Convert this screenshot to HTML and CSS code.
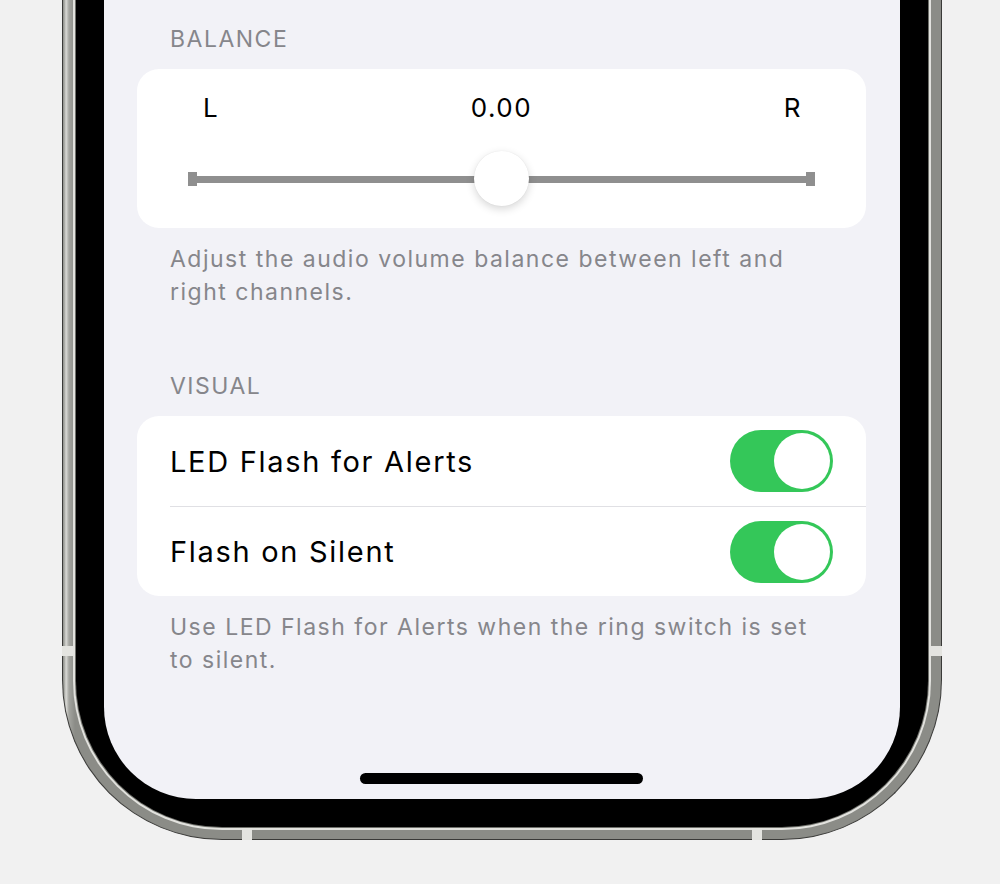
FILE: index.html
```html
<!DOCTYPE html>
<html>
<head>
<meta charset="utf-8">
<title>Audio &amp; Visual</title>
<link rel="stylesheet" href="styles.css">
</head>
<body>
<div class="device">
  <span class="band band-left"></span>
  <span class="band band-right"></span>
  <span class="band band-bottom-left"></span>
  <span class="band band-bottom-right"></span>
  <div class="bezel">
    <div class="screen">

      <div class="group-header">BALANCE</div>
      <div class="card balance">
        <div class="balance-labels">
          <span>L</span>
          <span>0.00</span>
          <span>R</span>
        </div>
        <div class="slider">
          <div class="track"></div>
          <div class="thumb"></div>
        </div>
      </div>
      <div class="group-footer">Adjust the audio volume balance between left and right channels.</div>

      <div class="group-header">VISUAL</div>
      <div class="card">
        <div class="row">
          <span class="row-label">LED Flash for Alerts</span>
          <span class="toggle on"><span class="knob"></span></span>
        </div>
        <div class="row">
          <span class="row-label">Flash on Silent</span>
          <span class="toggle on"><span class="knob"></span></span>
        </div>
      </div>
      <div class="group-footer">Use LED Flash for Alerts when the ring switch is set to silent.</div>

      <div class="home-indicator"></div>
    </div>
  </div>
</div>
</body>
</html>
```

FILE: styles.css
```css
html, body {
  margin: 0;
  padding: 0;
}
body {
  background: #f1f1f1;
  font-family: Inter, "Noto Sans", sans-serif;
  width: 1000px;
  height: 884px;
  overflow: hidden;
}

/* phone body: steel rim, black bezel, screen */
.device {
  position: relative;
  width: 880px;
  margin-left: 62px;
  padding: 0 13px 12px 13px;
  box-sizing: border-box;
  background: linear-gradient(90deg, #8e8f8a, #b4b5b0 2px, #dcdcd8 3px, #a3a49f 6px, #8b8c87 12px);
  border: 1px solid #3a3a38;
  border-top: none;
  border-radius: 0 0 160px 160px;
}
.bezel {
  background: #000;
  padding: 0 28px 28px 28px;
  border-radius: 0 0 146px 146px;
  box-shadow: 0 0 0 1px #6f706b, 0 0 0 3px #e2e2de;
}
.screen {
  position: relative;
  height: 799px;
  background: #f2f2f7;
  border-radius: 0 0 92px 92px;
  padding: 24px 34px 0 33px;
  box-sizing: border-box;
  overflow: hidden;
}

/* antenna lines on the rim */
.band {
  position: absolute;
  background: #e4e4e0;
}
.band-left { left: -1px; top: 646px; width: 13px; height: 10px; }
.band-right { right: -1px; top: 646px; width: 13px; height: 10px; }
.band-bottom-left { left: 179px; bottom: -1px; width: 10px; height: 12px; }
.band-bottom-right { right: 179px; bottom: -1px; width: 10px; height: 12px; }

.group-header {
  font-size: 23px;
  line-height: 30px;
  letter-spacing: 1.5px;
  color: #86868b;
  padding-left: 33px;
  margin-bottom: 15px;
}
.group-footer {
  font-size: 23px;
  line-height: 33px;
  letter-spacing: 1.5px;
  color: #86868b;
  padding: 15px 50px 0 33px;
  margin-bottom: 62px;
}

.card {
  background: #fff;
  border-radius: 22px;
}

/* balance slider */
.balance {
  padding: 22px 0 21px 0;
}
.balance-labels {
  display: flex;
  justify-content: space-between;
  padding: 0 64px 0 66px;
  font-size: 26px;
  line-height: 34px;
  letter-spacing: 1.5px;
  color: #000;
}
.slider {
  position: relative;
  height: 56px;
  margin: 26px 51px 0 51px;
}
.track {
  position: absolute;
  left: 0;
  right: 0;
  top: 25px;
  height: 7px;
  background: #8f8f8f;
}
.track::before, .track::after {
  content: "";
  position: absolute;
  top: -4px;
  width: 9px;
  height: 14px;
  background: #8f8f8f;
}
.track::before { left: 0; }
.track::after { right: 0; }
.thumb {
  position: absolute;
  left: 50%;
  top: 0;
  width: 55px;
  height: 55px;
  margin-left: -28px;
  border-radius: 50%;
  background: #fff;
  box-shadow: 0 3px 8px rgba(0, 0, 0, 0.16), 0 0 1px rgba(0, 0, 0, 0.1);
}

/* switch rows */
.row {
  display: flex;
  align-items: center;
  justify-content: space-between;
  height: 90px;
  padding: 0 33px;
  position: relative;
}
.row + .row {
  height: 89px;
  border-top: 1px solid #e0e0e4;
  margin-left: 33px;
  padding-left: 0;
}
.row-label {
  font-size: 29px;
  letter-spacing: 1.7px;
  color: #000;
}
.toggle {
  width: 103px;
  height: 62px;
  border-radius: 31px;
  background: #34c759;
  position: relative;
}
.knob {
  position: absolute;
  right: 3px;
  top: 3px;
  width: 56px;
  height: 56px;
  border-radius: 50%;
  background: #fff;
}

.home-indicator {
  position: absolute;
  left: 256px;
  top: 773px;
  width: 283px;
  height: 11px;
  border-radius: 6px;
  background: #000;
}
```
